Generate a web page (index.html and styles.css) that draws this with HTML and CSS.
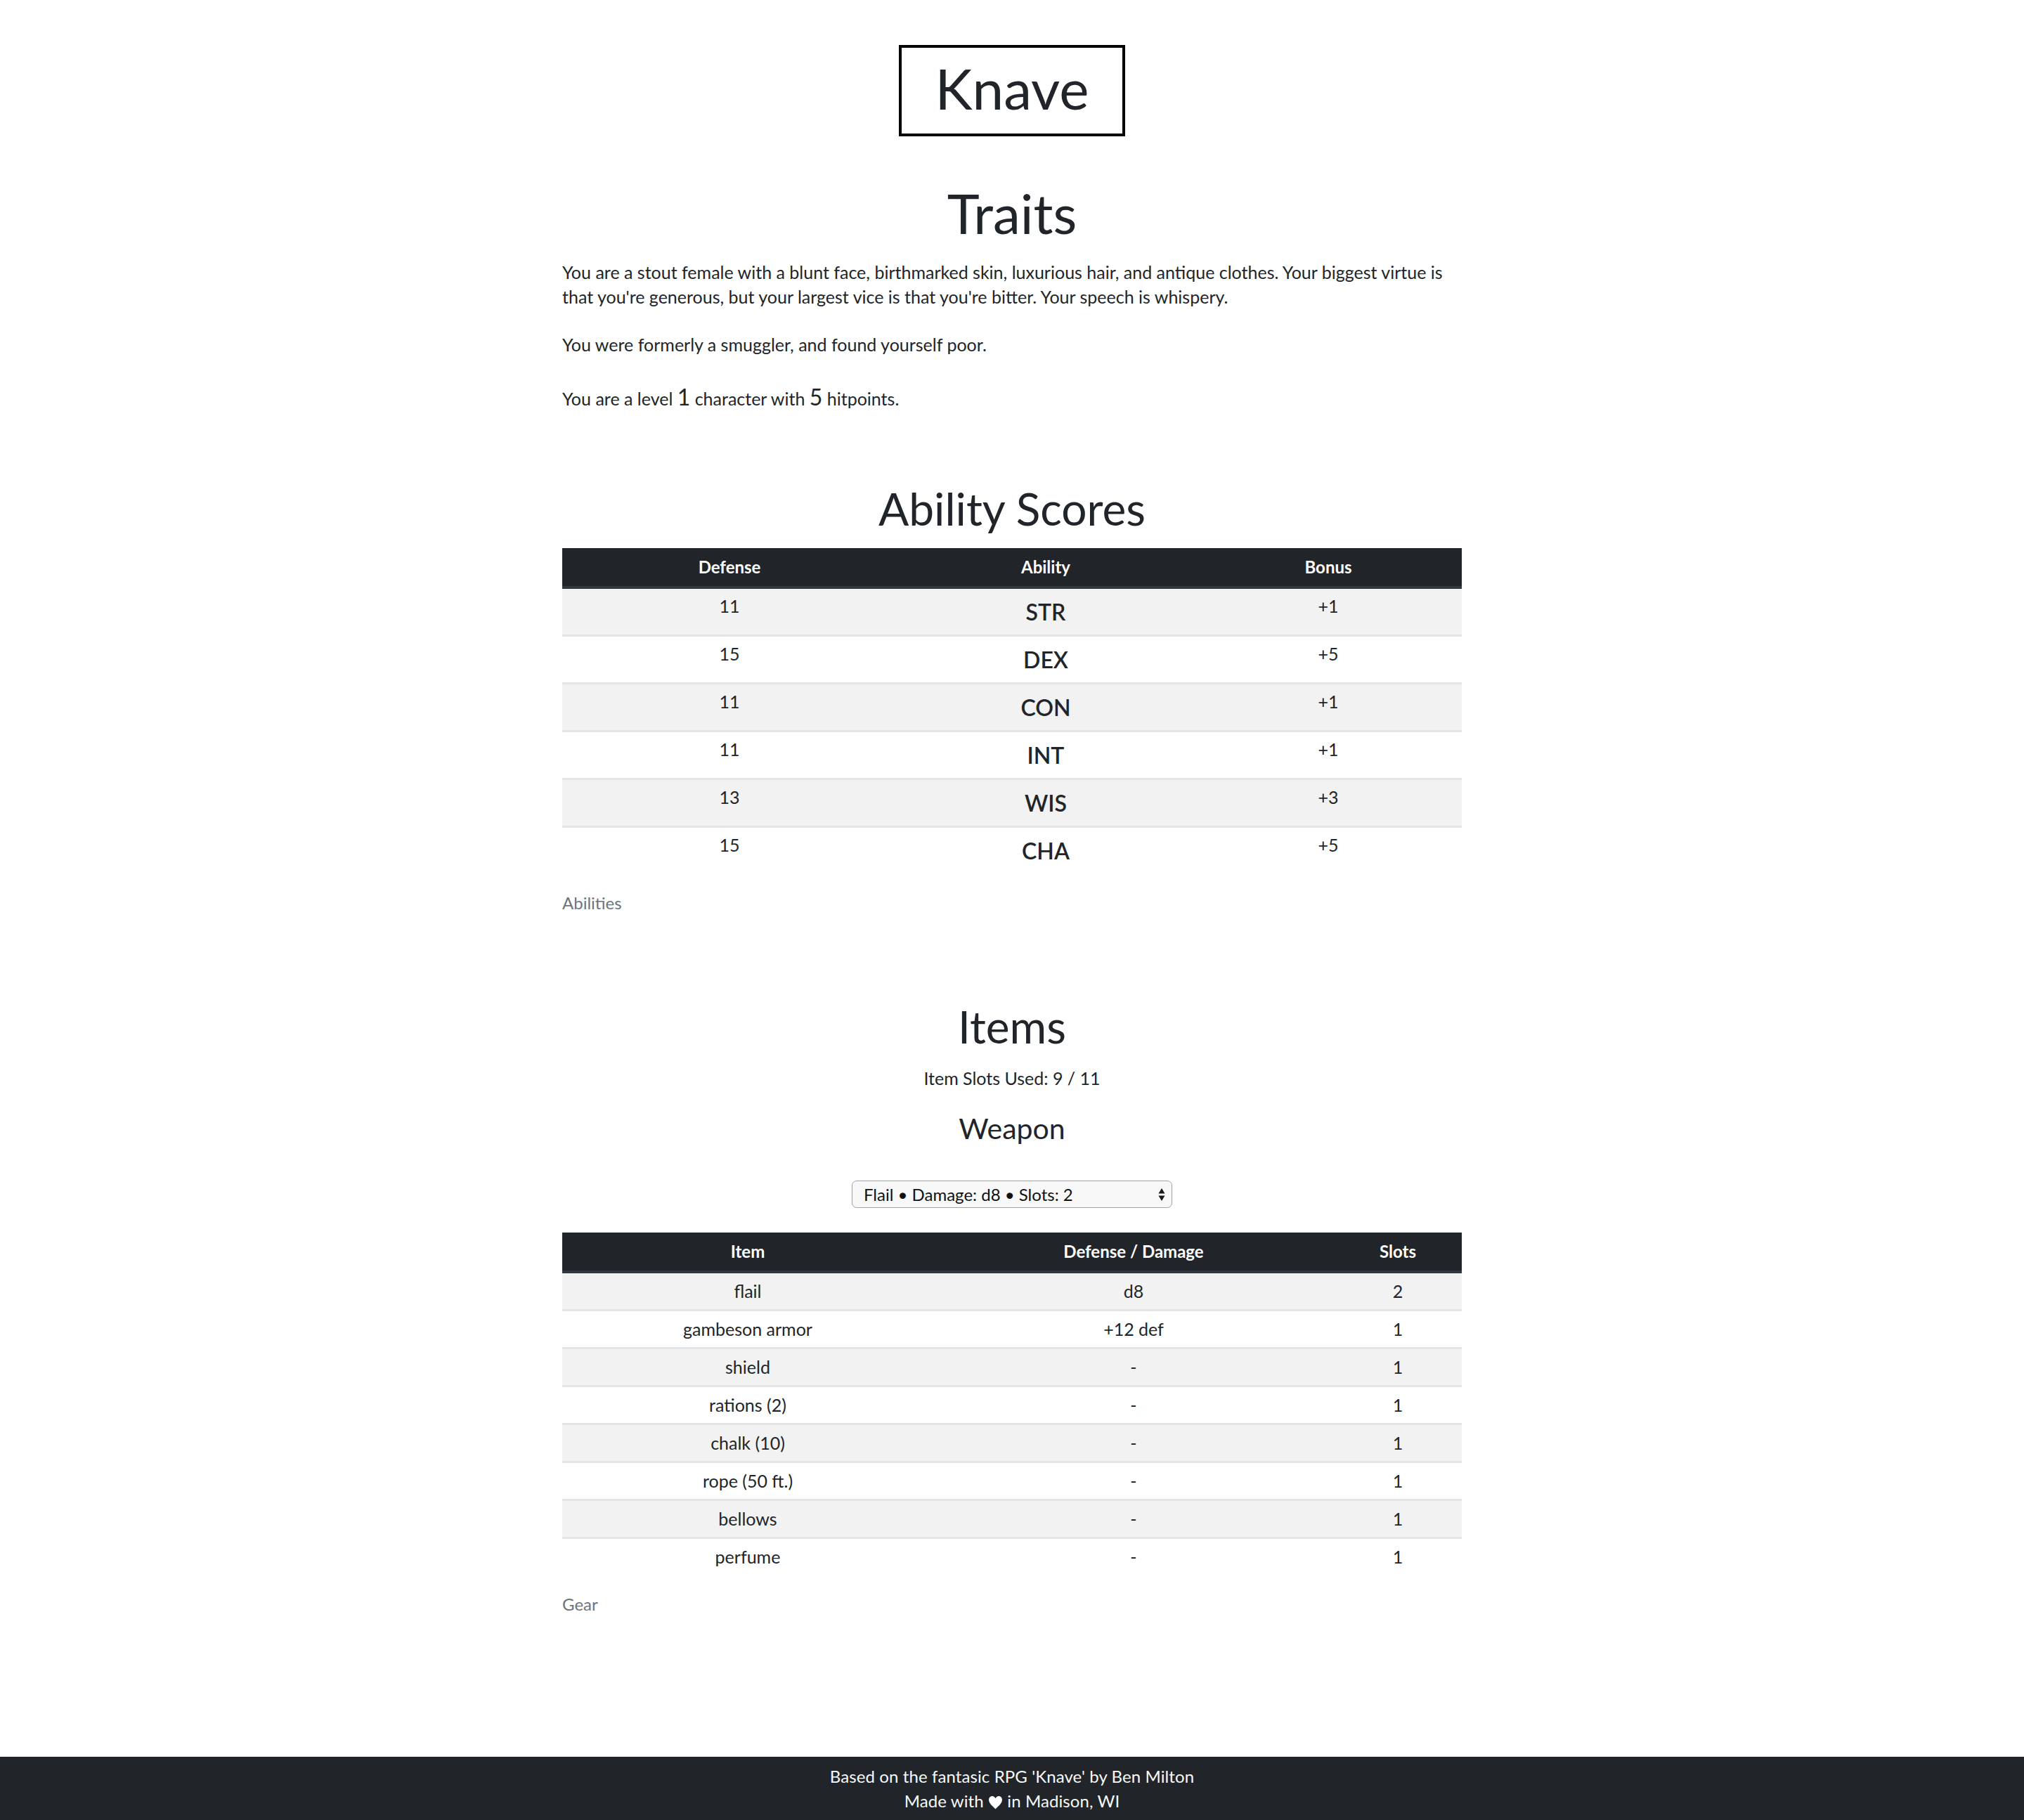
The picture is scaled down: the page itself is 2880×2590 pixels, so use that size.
FILE: index.html
```html
<!DOCTYPE html>
<html lang="en">
<head>
<meta charset="utf-8">
<title>Knave</title>
<link rel="stylesheet" href="styles.css">
</head>
<body>
<div class="page">
  <main class="container">
    <header class="brand"><h1 class="logo">Knave</h1></header>

    <section class="traits">
      <h1 class="title">Traits</h1>
      <p>You are a stout female with a blunt face, birthmarked skin, luxurious hair, and antique clothes. Your biggest virtue is that you're generous, but your largest vice is that you're bitter. Your speech is whispery.</p>
      <p>You were formerly a smuggler, and found yourself poor.</p>
      <p class="last">You are a level <span class="big">1</span> character with <span class="big">5</span> hitpoints.</p>
    </section>

    <section class="block">
      <h2 class="section-title">Ability Scores</h2>
      <table class="sheet abilities">
        <caption>Abilities</caption>
        <colgroup><col class="c-def"><col class="c-abl"><col class="c-bon"></colgroup>
        <thead><tr><th>Defense</th><th>Ability</th><th>Bonus</th></tr></thead>
        <tbody>
          <tr><td>11</td><td class="abl">STR</td><td>+1</td></tr>
          <tr><td>15</td><td class="abl">DEX</td><td>+5</td></tr>
          <tr><td>11</td><td class="abl">CON</td><td>+1</td></tr>
          <tr><td>11</td><td class="abl">INT</td><td>+1</td></tr>
          <tr><td>13</td><td class="abl">WIS</td><td>+3</td></tr>
          <tr><td>15</td><td class="abl">CHA</td><td>+5</td></tr>
        </tbody>
      </table>
    </section>

    <section class="block block-items">
      <h2 class="section-title">Items</h2>
      <p class="slots">Item Slots Used: 9 / 11</p>
      <h3 class="sub-title">Weapon</h3>
      <div class="select-row">
        <div class="select-wrap">
          <select class="weapon">
            <option>Flail • Damage: d8 • Slots: 2</option>
          </select>
          <svg class="select-arrows" width="10" height="20" viewBox="0 0 10 20" aria-hidden="true">
            <path d="M5 1 L9.5 8.5 H0.5 Z" fill="#1a1a1a"/>
            <path d="M5 19 L9.5 11.5 H0.5 Z" fill="#1a1a1a"/>
          </svg>
        </div>
      </div>
      <table class="sheet items">
        <caption>Gear</caption>
        <colgroup><col class="c-item"><col class="c-dmg"><col class="c-slot"></colgroup>
        <thead><tr><th>Item</th><th>Defense / Damage</th><th>Slots</th></tr></thead>
        <tbody>
          <tr><td>flail</td><td>d8</td><td>2</td></tr>
          <tr><td>gambeson armor</td><td>+12 def</td><td>1</td></tr>
          <tr><td>shield</td><td>-</td><td>1</td></tr>
          <tr><td>rations (2)</td><td>-</td><td>1</td></tr>
          <tr><td>chalk (10)</td><td>-</td><td>1</td></tr>
          <tr><td>rope (50 ft.)</td><td>-</td><td>1</td></tr>
          <tr><td>bellows</td><td>-</td><td>1</td></tr>
          <tr><td>perfume</td><td>-</td><td>1</td></tr>
        </tbody>
      </table>
    </section>
  </main>

  <footer class="footer">
    <div>Based on the fantasic RPG 'Knave' by Ben Milton</div>
    <div>Made with <svg class="heart" width="21" height="20" viewBox="0 0 20 19" aria-hidden="true"><path d="M10 18.5 C8.5 16.5 1 11.5 1 6 C1 3 3.2 1 5.6 1 C7.6 1 9.2 2.3 10 4 C10.8 2.3 12.4 1 14.4 1 C16.8 1 19 3 19 6 C19 11.5 11.5 16.5 10 18.5 Z" fill="#ffffff"/></svg> in Madison, WI</div>
  </footer>
</div>
</body>
</html>
```

FILE: styles.css
```css
* { box-sizing: border-box; }

html, body {
  margin: 0;
  padding: 0;
}

body {
  font-family: Lato, "Noto Sans", sans-serif;
  font-size: 25px;
  line-height: 35px;
  color: #212529;
  background: #ffffff;
}

.page {
  min-height: 100vh;
  display: flex;
  flex-direction: column;
}

.container {
  width: 1280px;
  margin: 0 auto;
  flex: 1 0 auto;
}

/* Brand */
.brand {
  display: flex;
  justify-content: center;
  padding-top: 64px;
}

.logo {
  margin: 0;
  font-weight: 400;
  font-size: 80px;
  line-height: 96px;
  border: 4px solid #000000;
  padding: 9px 48px 17px;
}

/* Traits */
.title {
  margin: 62px 0 20px;
  text-align: center;
  font-weight: 400;
  font-size: 78px;
  line-height: 94px;
}

.traits p {
  margin: 0 0 33px;
}

.traits p.last {
  margin-bottom: 0;
}

.big {
  font-size: 32px;
  line-height: 48px;
}

/* Sections */
.block {
  margin-top: 96px;
}

.block-items {
  margin-top: 120px;
}

.section-title {
  margin: 0 0 18px;
  text-align: center;
  font-weight: 400;
  font-size: 64px;
  line-height: 77px;
}

.slots {
  margin: 0;
  text-align: center;
}

.sub-title {
  margin: 29px 0 0;
  text-align: center;
  font-weight: 400;
  font-size: 41px;
  line-height: 49px;
}

.select-row {
  display: flex;
  justify-content: center;
  margin-top: 50px;
  margin-bottom: 35px;
}

.select-wrap {
  position: relative;
  width: 456px;
  height: 39px;
}

.weapon {
  appearance: none;
  -webkit-appearance: none;
  width: 100%;
  height: 100%;
  margin: 0;
  padding: 0 36px 0 16px;
  font-family: Lato, "Noto Sans", sans-serif;
  font-size: 24px;
  color: #111111;
  background: #f8f8f8;
  border: 1.5px solid #a2a2a2;
  border-radius: 7px;
}

.select-arrows {
  position: absolute;
  right: 10px;
  top: 10px;
}

/* Tables */
.sheet {
  width: 1280px;
  table-layout: fixed;
  border-collapse: separate;
  border-spacing: 0;
  margin-bottom: 22px;
}

.sheet caption {
  caption-side: bottom;
  text-align: left;
  padding-top: 24px;
  font-size: 24px;
  color: #6c757d;
}

.c-def { width: 476px; }
.c-abl { width: 424px; }
.c-bon { width: 380px; }

.c-item { width: 528px; }
.c-dmg { width: 570px; }
.c-slot { width: 182px; }

.sheet th {
  background: #212529;
  color: #ffffff;
  font-size: 24px;
  font-weight: 700;
  line-height: 36px;
  padding: 9px 12px;
  text-align: center;
  border-bottom: 4px solid #32383e;
}

.sheet td {
  text-align: center;
  padding: 7px 12px;
}

.sheet tbody tr:nth-child(odd) td {
  background: #f2f2f2;
}

.sheet tbody tr + tr td {
  border-top: 3px solid #e3e6e9;
}

.abilities td {
  vertical-align: top;
}

.abilities td.abl {
  font-size: 32px;
  line-height: 51px;
  font-weight: 600;
}

.items td {
  vertical-align: middle;
  padding: 8px 12px;
}

/* Footer */
.footer {
  background: #212529;
  color: #f8f9fa;
  text-align: center;
  font-size: 24px;
  letter-spacing: 0.1px;
  line-height: 35px;
  padding: 10px 0;
}

.heart {
  vertical-align: -3px;
}
```
